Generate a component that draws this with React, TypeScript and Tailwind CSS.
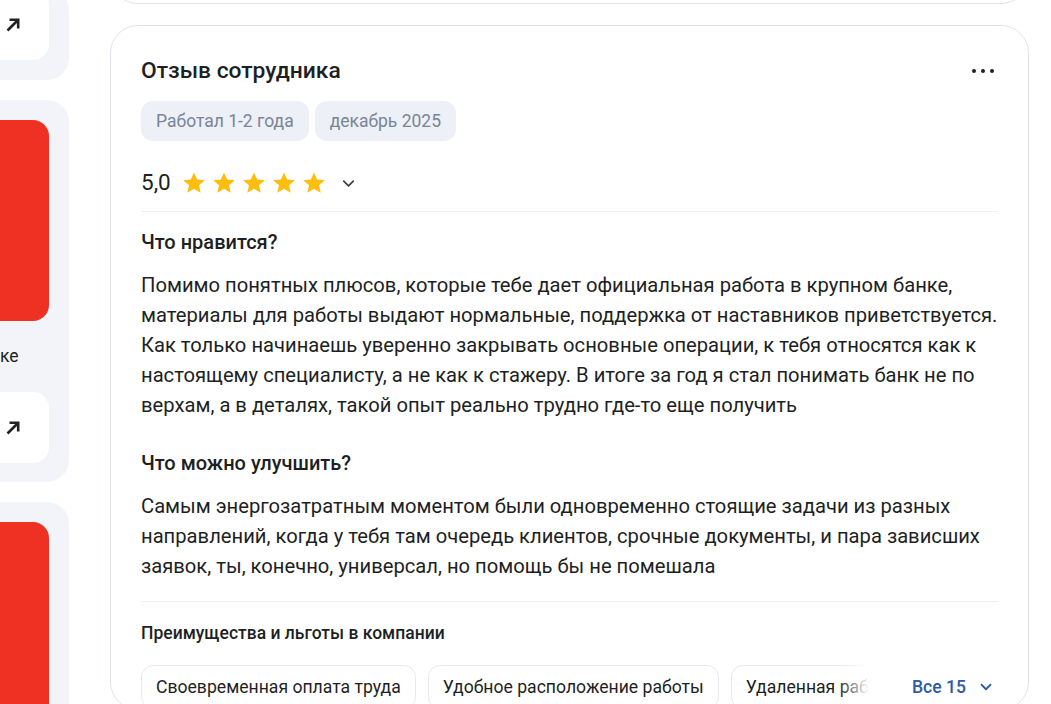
import { ChevronDown } from 'lucide-react';

const likedLines = [
  'Помимо понятных плюсов, которые тебе дает официальная работа в крупном банке,',
  'материалы для работы выдают нормальные, поддержка от наставников приветствуется.',
  'Как только начинаешь уверенно закрывать основные операции, к тебя относятся как к',
  'настоящему специалисту, а не как к стажеру. В итоге за год я стал понимать банк не по',
  'верхам, а в деталях, такой опыт реально трудно где-то еще получить',
];

const improveLines = [
  'Самым энергозатратным моментом были одновременно стоящие задачи из разных',
  'направлений, когда у тебя там очередь клиентов, срочные документы, и пара зависших',
  'заявок, ты, конечно, универсал, но помощь бы не помешала',
];

const benefits = [
  'Своевременная оплата труда',
  'Удобное расположение работы',
  'Удаленная работа',
  'ДМС',
];

const Star = () => (
  <svg width="26" height="26" viewBox="0 0 24 24" className="shrink-0">
    <path
      d="M12 2.2l2.9 6.6 7.1.6-5.4 4.7 1.6 7-6.2-3.7-6.2 3.7 1.6-7L2 9.4l7.1-.6z"
      fill="#fdbe0f"
    />
  </svg>
);

const SideCard = ({ children, className = '' }: { children: React.ReactNode; className?: string }) => (
  <div className={`shrink-0 bg-[#f3f4fa] rounded-r-[22px] pr-5 ${className}`}>{children}</div>
);

const ArrowButton = () => (
  <div className="h-[71px] bg-white rounded-r-[16px] flex items-center pl-[5px]">
    <svg width="16" height="16" viewBox="0 0 16 16" fill="none" stroke="#222" strokeWidth="2.6">
      <path d="M2.5 13.5L13 3" />
      <path d="M4.5 2.8H13.2V11.5" strokeLinejoin="miter" />
    </svg>
  </div>
);

const Paragraph = ({ lines }: { lines: string[] }) => (
  <p className="mt-[15px] text-[20.2px] leading-[30px] text-[#1d1f23]">
    {lines.map((l, i) => (
      <span key={i} className="block whitespace-nowrap">
        {l}
      </span>
    ))}
  </p>
);

export default function App() {
  return (
    <div
      className="h-[704px] w-[1051px] overflow-hidden bg-white flex gap-[41px]"
      style={{ fontFamily: 'Roboto, "Noto Sans", sans-serif' }}
    >
      {/* left column */}
      <div className="w-[69px] shrink-0 flex flex-col gap-[20px]">
        <SideCard className="mt-[-11px] pb-[20px]">
          <ArrowButton />
        </SideCard>
        <SideCard className="pt-[20px] pb-[19px]">
          <div className="h-[201px] bg-[#ef3124] rounded-r-[16px]" />
          <div className="mt-[24px] mb-[25px] h-[22px] text-[17.5px] leading-[22px] text-[#1d1f23]">ке</div>
          <ArrowButton />
        </SideCard>
        <SideCard className="pt-[20px] pb-[20px]">
          <div className="h-[300px] bg-[#ef3124] rounded-r-[16px]" />
        </SideCard>
      </div>

      {/* main column */}
      <div className="w-[919px] shrink-0 flex flex-col gap-[21px]">
        <div className="shrink-0 h-[60px] mt-[-56px] rounded-[28px] border border-[#dfe3ea]" />

        <div className="shrink-0 rounded-[28px] border border-[#dfe3ea] px-[30px] pt-[31px]">
          <div className="flex items-center justify-between h-[28px]">
            <h2 className="text-[22.8px] font-medium text-[#1d1f23] leading-[28px]">Отзыв сотрудника</h2>
            <div className="flex items-center gap-[5px] pr-[4px]">
              <span className="w-[4px] h-[4px] rounded-full bg-[#1d1f23]" />
              <span className="w-[4px] h-[4px] rounded-full bg-[#1d1f23]" />
              <span className="w-[4px] h-[4px] rounded-full bg-[#1d1f23]" />
            </div>
          </div>

          <div className="mt-[16px] flex gap-[6px]">
            <span className="h-[40px] px-[15px] rounded-[12px] bg-[#edf0f6] text-[#7a8497] text-[17.5px] flex items-center">
              Работал 1-2 года
            </span>
            <span className="h-[40px] px-[15px] rounded-[12px] bg-[#edf0f6] text-[#7a8497] text-[17.5px] flex items-center">
              декабрь 2025
            </span>
          </div>

          <div className="mt-[26px] flex items-center h-[32px]">
            <span className="text-[22.5px] text-[#1d1f23] mr-[10px]">5,0</span>
            <div className="flex gap-[4px]">
              <Star />
              <Star />
              <Star />
              <Star />
              <Star />
            </div>
            <ChevronDown size={19} strokeWidth={2.2} className="ml-[12px] text-[#3d4047]" />
          </div>

          <div className="mt-[12px] h-px bg-[#eef0f4]" />

          <h3 className="mt-[17px] text-[20px] leading-[26px] font-medium text-[#1d1f23]">Что нравится?</h3>
          <Paragraph lines={likedLines} />

          <h3 className="mt-[30px] text-[20px] leading-[26px] font-medium text-[#1d1f23]">Что можно улучшить?</h3>
          <Paragraph lines={improveLines} />

          <div className="mt-[20px] h-px bg-[#eef0f4]" />

          <h4 className="mt-[20px] text-[17.5px] leading-[22px] font-medium text-[#1d1f23]">
            Преимущества и льготы в компании
          </h4>

          <div className="mt-[21px] flex items-start">
            <div className="relative w-[738px] shrink-0 overflow-hidden">
              <div className="flex gap-[12px]">
                {benefits.map((b) => (
                  <span
                    key={b}
                    className="shrink-0 h-[44px] px-[14px] rounded-[12px] border border-[#e6e9ef] text-[17.6px] text-[#1d1f23] flex items-center whitespace-nowrap"
                  >
                    {b}
                  </span>
                ))}
              </div>
              <div className="absolute top-0 right-0 h-full w-[40px] bg-gradient-to-r from-white/0 to-white to-75%" />
            </div>
            <button className="h-[44px] pl-[33px] flex items-center gap-[11px] text-[17.6px] font-medium text-[#2f5ba6]">
              Все 15
              <ChevronDown size={18} strokeWidth={2.4} />
            </button>
          </div>
        </div>
      </div>
    </div>
  );
}
